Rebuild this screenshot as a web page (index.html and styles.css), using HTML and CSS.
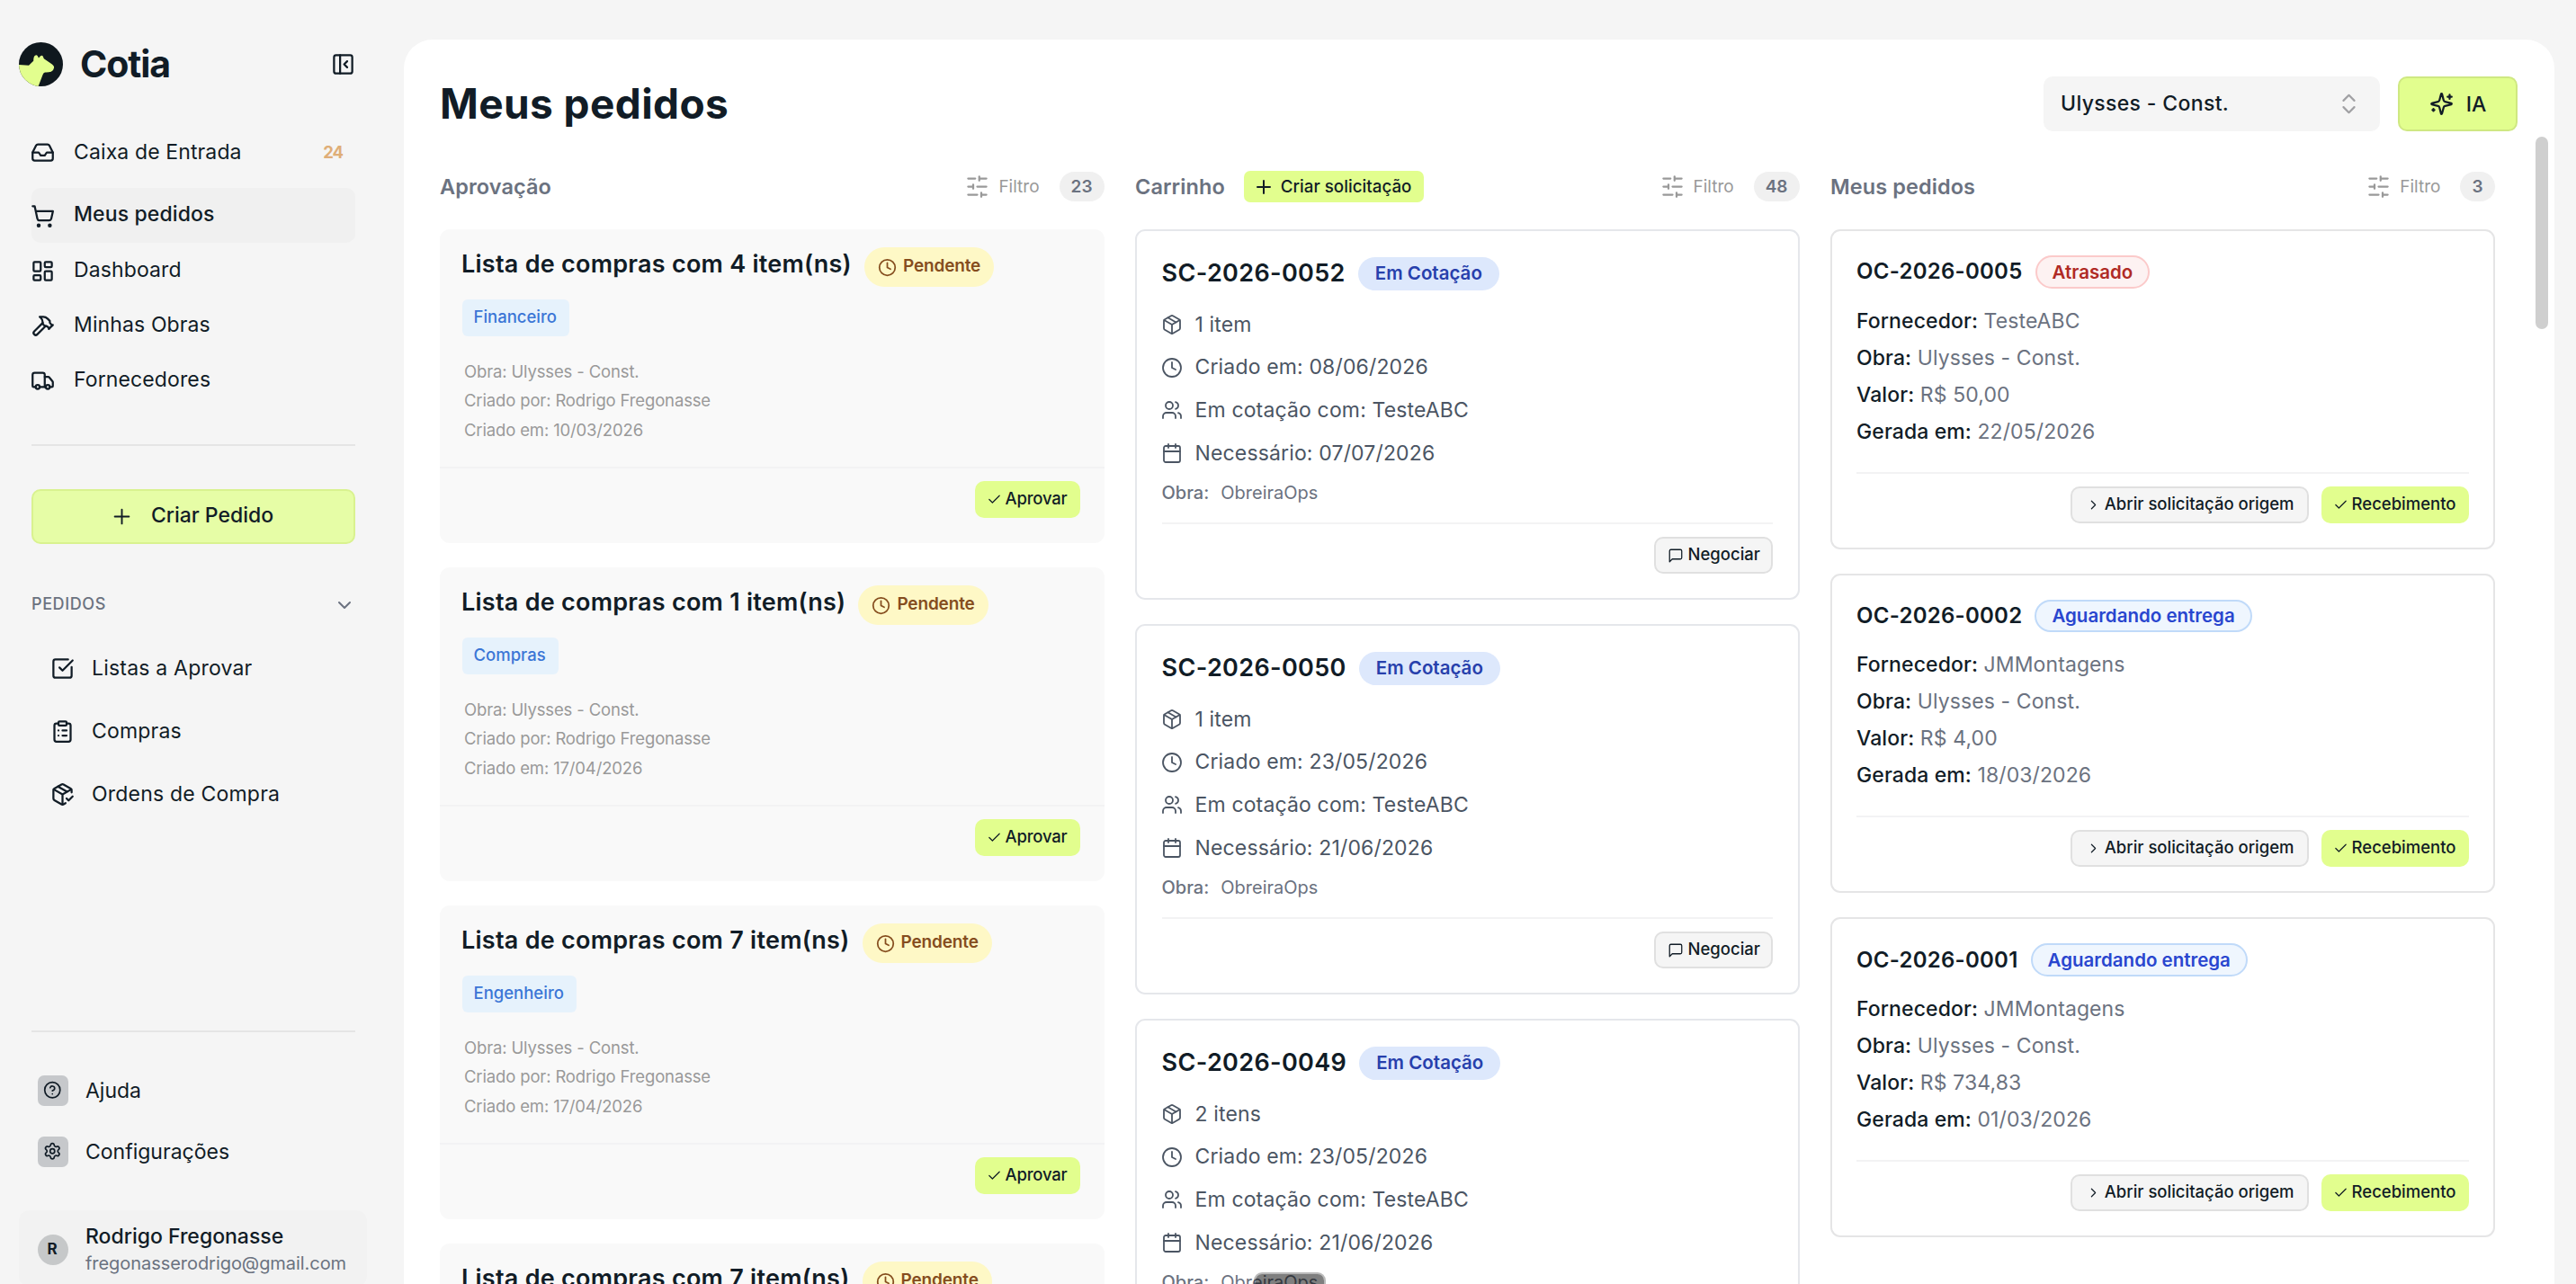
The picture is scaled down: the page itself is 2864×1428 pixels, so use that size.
FILE: index.html
```
<!DOCTYPE html>
<html lang="pt-BR">
<head>
<meta charset="UTF-8">
<meta name="viewport" content="width=device-width, initial-scale=1.0">

<title>Cotia - Meus pedidos</title>

<link rel="stylesheet" href="styles.css">
</head>

<body>

<!-- ICONS -->
<svg class="sprite" aria-hidden="true">
  <symbol id="i-panel" viewBox="0 0 24 24"><rect x="3" y="3" width="18" height="18" rx="2"/><path d="M9 3v18M16 15l-3-3 3-3"/></symbol>
  <symbol id="i-inbox" viewBox="0 0 24 24"><path d="M22 12h-6l-2 3h-4l-2-3H2"/><path d="M5.45 5.11 2 12v6a2 2 0 0 0 2 2h16a2 2 0 0 0 2-2v-6l-3.45-6.89A2 2 0 0 0 16.76 4H7.24a2 2 0 0 0-1.79 1.11z"/></symbol>
  <symbol id="i-cart" viewBox="0 0 24 24"><circle cx="8" cy="21" r="1"/><circle cx="19" cy="21" r="1"/><path d="M2.05 2.05h2l2.66 12.42a2 2 0 0 0 2 1.58h9.78a2 2 0 0 0 1.95-1.57l1.65-7.43H5.12"/></symbol>
  <symbol id="i-dash" viewBox="0 0 24 24"><rect x="3" y="3" width="7" height="9" rx="1"/><rect x="14" y="3" width="7" height="5" rx="1"/><rect x="14" y="12" width="7" height="9" rx="1"/><rect x="3" y="16" width="7" height="5" rx="1"/></symbol>
  <symbol id="i-hammer" viewBox="0 0 24 24"><path d="m15 12-8.373 8.373a1 1 0 1 1-3-3L12 9"/><path d="m18 15 4-4"/><path d="m21.5 11.5-1.914-1.914A2 2 0 0 1 19 8.172V7l-2.26-2.26a6 6 0 0 0-4.202-1.756L9 2.96l.92.82A6.18 6.18 0 0 1 12 8.4V10l2 2h1.172a2 2 0 0 1 1.414.586L18.5 14.5"/></symbol>
  <symbol id="i-truck" viewBox="0 0 24 24"><path d="M14 18V6a2 2 0 0 0-2-2H4a2 2 0 0 0-2 2v11a1 1 0 0 0 1 1h2"/><path d="M15 18H9"/><path d="M19 18h2a1 1 0 0 0 1-1v-3.65a1 1 0 0 0-.22-.624l-3.48-4.35A1 1 0 0 0 17.52 8H14"/><circle cx="17" cy="18" r="2"/><circle cx="7" cy="18" r="2"/></symbol>
  <symbol id="i-plus" viewBox="0 0 24 24"><path d="M5 12h14M12 5v14"/></symbol>
  <symbol id="i-down" viewBox="0 0 24 24"><path d="m6 9 6 6 6-6"/></symbol>
  <symbol id="i-right" viewBox="0 0 24 24"><path d="m9 18 6-6-6-6"/></symbol>
  <symbol id="i-check" viewBox="0 0 24 24"><path d="M20 6 9 17l-5-5"/></symbol>
  <symbol id="i-checkbox" viewBox="0 0 24 24"><path d="M21 10.5V19a2 2 0 0 1-2 2H5a2 2 0 0 1-2-2V5a2 2 0 0 1 2-2h12.5"/><path d="m9 11 3 3L22 4"/></symbol>
  <symbol id="i-clipboard" viewBox="0 0 24 24"><rect x="8" y="2" width="8" height="4" rx="1"/><path d="M16 4h2a2 2 0 0 1 2 2v14a2 2 0 0 1-2 2H6a2 2 0 0 1-2-2V6a2 2 0 0 1 2-2h2"/><path d="M12 11h4M12 16h4M8 11h.01M8 16h.01"/></symbol>
  <symbol id="i-boxcheck" viewBox="0 0 24 24"><path d="m16 16 2 2 4-4"/><path d="M21 10V8a2 2 0 0 0-1-1.73l-7-4a2 2 0 0 0-2 0l-7 4A2 2 0 0 0 3 8v8a2 2 0 0 0 1 1.73l7 4a2 2 0 0 0 2 0l2-1.14"/><path d="m7.5 4.27 9 5.15M3.29 7 12 12l8.71-5M12 22V12"/></symbol>
  <symbol id="i-help" viewBox="0 0 24 24"><circle cx="12" cy="12" r="10"/><path d="M9.09 9a3 3 0 0 1 5.83 1c0 2-3 3-3 3M12 17h.01"/></symbol>
  <symbol id="i-gear" viewBox="0 0 24 24"><path d="M9.67 4.14a2.34 2.34 0 0 1 4.66 0 2.34 2.34 0 0 0 3.32 1.91 2.34 2.34 0 0 1 2.33 4.04 2.34 2.34 0 0 0 0 3.82 2.34 2.34 0 0 1-2.33 4.04 2.34 2.34 0 0 0-3.32 1.91 2.34 2.34 0 0 1-4.66 0 2.34 2.34 0 0 0-3.32-1.91 2.34 2.34 0 0 1-2.33-4.04 2.34 2.34 0 0 0 0-3.82 2.34 2.34 0 0 1 2.33-4.04 2.34 2.34 0 0 0 3.32-1.91"/><circle cx="12" cy="12" r="3"/></symbol>
  <symbol id="i-updown" viewBox="0 0 24 24"><path d="m7 15 5 5 5-5M7 9l5-5 5 5"/></symbol>
  <symbol id="i-sparkles" viewBox="0 0 24 24"><path d="M9.937 15.5A2 2 0 0 0 8.5 14.063l-6.135-1.582a.5.5 0 0 1 0-.962L8.5 9.936A2 2 0 0 0 9.937 8.5l1.582-6.135a.5.5 0 0 1 .963 0L14.063 8.5A2 2 0 0 0 15.5 9.937l6.135 1.581a.5.5 0 0 1 0 .964L15.5 14.063a2 2 0 0 0-1.437 1.437l-1.582 6.135a.5.5 0 0 1-.963 0z"/><path d="M20 3v4M22 5h-4M4 17v2M5 18H3"/></symbol>
  <symbol id="i-sliders" viewBox="0 0 24 24"><path d="M21 4h-7M10 4H3M21 12h-9M8 12H3M21 20h-5M12 20H3M14 2v4M8 10v4M16 18v4"/></symbol>
  <symbol id="i-clock" viewBox="0 0 24 24"><circle cx="12" cy="12" r="10"/><path d="M12 6v6l4 2"/></symbol>
  <symbol id="i-box" viewBox="0 0 24 24"><path d="m7.5 4.27 9 5.15"/><path d="M21 8a2 2 0 0 0-1-1.73l-7-4a2 2 0 0 0-2 0l-7 4A2 2 0 0 0 3 8v8a2 2 0 0 0 1 1.73l7 4a2 2 0 0 0 2 0l7-4A2 2 0 0 0 21 16Z"/><path d="m3.3 7 8.7 5 8.7-5M12 22V12"/></symbol>
  <symbol id="i-users" viewBox="0 0 24 24"><path d="M16 21v-2a4 4 0 0 0-4-4H6a4 4 0 0 0-4 4v2"/><circle cx="9" cy="7" r="4"/><path d="M22 21v-2a4 4 0 0 0-3-3.87M16 3.13a4 4 0 0 1 0 7.75"/></symbol>
  <symbol id="i-cal" viewBox="0 0 24 24"><path d="M8 2v4M16 2v4"/><rect x="3" y="4" width="18" height="18" rx="2"/><path d="M3 10h18"/></symbol>
  <symbol id="i-msg" viewBox="0 0 24 24"><path d="M21 15a2 2 0 0 1-2 2H7l-4 4V5a2 2 0 0 1 2-2h14a2 2 0 0 1 2 2z"/></symbol>
</svg>

<div class="app">

  <!-- SIDEBAR -->
  <aside class="sidebar">
    <div class="brand">
      <svg class="logo" viewBox="0 0 49 49">
        <clipPath id="round"><circle cx="24.5" cy="24.5" r="24.5"/></clipPath>
        <g clip-path="url(#round)">
          <rect width="49" height="49" fill="#0f181e"/>
          <path fill="#e2fe8e" d="M0 25 11 25.7 16.2 20.8Q16.2 16 18 14.8 19.6 13.6 20.8 15.2L22 17.6 23.8 15.6Q25.8 14 26.8 15.8L27.8 18.3 35.5 23.4Q39.4 25.8 39.1 28.2 38.6 31.6 35.8 32.7 32.6 33.6 29 33.4 27.4 33.8 26.6 36L21.6 49H0z"/>
        </g>
      </svg>
      <span class="brand-name">Cotia</span>
      <svg class="ico nav-ico toggle"><use href="#i-panel"/></svg>
    </div>

    <nav class="nav">
      <a class="nav-item first"><svg class="ico nav-ico"><use href="#i-inbox"/></svg><span>Caixa de Entrada</span><b class="unread">24</b></a>
      <a class="nav-item active"><svg class="ico nav-ico"><use href="#i-cart"/></svg><span>Meus pedidos</span></a>
      <a class="nav-item"><svg class="ico nav-ico"><use href="#i-dash"/></svg><span>Dashboard</span></a>
      <a class="nav-item"><svg class="ico nav-ico"><use href="#i-hammer"/></svg><span>Minhas Obras</span></a>
      <a class="nav-item"><svg class="ico nav-ico"><use href="#i-truck"/></svg><span>Fornecedores</span></a>
    </nav>

    <div class="line"></div>
    <button class="create"><svg class="ico nav-ico"><use href="#i-plus"/></svg><span>Criar Pedido</span></button>

    <div class="group-title"><span>PEDIDOS</span><svg class="ico"><use href="#i-down"/></svg></div>
    <nav class="subnav">
      <a class="sub-item"><svg class="ico nav-ico"><use href="#i-checkbox"/></svg><span>Listas a Aprovar</span></a>
      <a class="sub-item"><svg class="ico nav-ico"><use href="#i-clipboard"/></svg><span>Compras</span></a>
      <a class="sub-item"><svg class="ico nav-ico"><use href="#i-boxcheck"/></svg><span>Ordens de Compra</span></a>
    </nav>

    <div class="bottom">
      <div class="line"></div>
      <a class="util"><i class="square"><svg class="ico"><use href="#i-help"/></svg></i><span>Ajuda</span></a>
      <a class="util"><i class="square"><svg class="ico"><use href="#i-gear"/></svg></i><span>Configurações</span></a>
      <div class="user">
        <div class="avatar">R</div>
        <div>
          <div class="user-name">Rodrigo Fregonasse</div>
          <div class="user-mail">fregonasserodrigo@gmail.com</div>
        </div>
      </div>
    </div>
  </aside>

  <!-- MAIN -->
  <main class="main">
    <header class="top">
      <h1>Meus pedidos</h1>
      <div class="select"><span>Ulysses - Const.</span><svg class="ico"><use href="#i-updown"/></svg></div>
      <button class="ia"><svg class="ico nav-ico"><use href="#i-sparkles"/></svg><span>IA</span></button>
    </header>

    <div class="board">

      <!-- Aprovação -->
      <section class="col">
        <div class="col-head">
          <h2>Aprovação</h2>
          <div class="filter"><svg class="ico nav-ico"><use href="#i-sliders"/></svg>Filtro</div>
          <span class="count">23</span>
        </div>

        <article class="card list">
          <div class="card-head"><h3>Lista de compras com 4 item(ns)</h3><span class="pill pending"><svg class="ico"><use href="#i-clock"/></svg><span>Pendente</span></span></div>
          <span class="tag">Financeiro</span>
          <div class="info"><p>Obra: Ulysses - Const.</p><p>Criado por: Rodrigo Fregonasse</p><p>Criado em: 10/03/2026</p></div>
          <div class="actions"><button class="btn green approve"><svg class="ico"><use href="#i-check"/></svg><span>Aprovar</span></button></div>
        </article>

        <article class="card list">
          <div class="card-head"><h3>Lista de compras com 1 item(ns)</h3><span class="pill pending"><svg class="ico"><use href="#i-clock"/></svg><span>Pendente</span></span></div>
          <span class="tag">Compras</span>
          <div class="info"><p>Obra: Ulysses - Const.</p><p>Criado por: Rodrigo Fregonasse</p><p>Criado em: 17/04/2026</p></div>
          <div class="actions"><button class="btn green approve"><svg class="ico"><use href="#i-check"/></svg><span>Aprovar</span></button></div>
        </article>

        <article class="card list">
          <div class="card-head"><h3>Lista de compras com 7 item(ns)</h3><span class="pill pending"><svg class="ico"><use href="#i-clock"/></svg><span>Pendente</span></span></div>
          <span class="tag">Engenheiro</span>
          <div class="info"><p>Obra: Ulysses - Const.</p><p>Criado por: Rodrigo Fregonasse</p><p>Criado em: 17/04/2026</p></div>
          <div class="actions"><button class="btn green approve"><svg class="ico"><use href="#i-check"/></svg><span>Aprovar</span></button></div>
        </article>

        <article class="card list">
          <div class="card-head"><h3>Lista de compras com 7 item(ns)</h3><span class="pill pending"><svg class="ico"><use href="#i-clock"/></svg><span>Pendente</span></span></div>
        </article>
      </section>

      <!-- Carrinho -->
      <section class="col">
        <div class="col-head">
          <h2>Carrinho</h2>
          <button class="new"><svg class="ico"><use href="#i-plus"/></svg><span>Criar solicitação</span></button>
          <div class="filter"><svg class="ico nav-ico"><use href="#i-sliders"/></svg>Filtro</div>
          <span class="count">48</span>
        </div>

        <article class="card cart">
          <div class="card-head"><h3>SC-2026-0052</h3><span class="pill quote">Em Cotação</span></div>
          <ul class="facts">
            <li><svg class="ico"><use href="#i-box"/></svg><span>1 item</span></li>
            <li><svg class="ico"><use href="#i-clock"/></svg><span>Criado em: 08/06/2026</span></li>
            <li><svg class="ico"><use href="#i-users"/></svg><span>Em cotação com: TesteABC</span></li>
            <li><svg class="ico"><use href="#i-cal"/></svg><span>Necessário: 07/07/2026</span></li>
          </ul>
          <div class="site"><b>Obra:</b><span>ObreiraOps</span></div>
          <div class="actions"><button class="btn grey talk"><svg class="ico"><use href="#i-msg"/></svg><span>Negociar</span></button></div>
        </article>

        <article class="card cart">
          <div class="card-head"><h3>SC-2026-0050</h3><span class="pill quote">Em Cotação</span></div>
          <ul class="facts">
            <li><svg class="ico"><use href="#i-box"/></svg><span>1 item</span></li>
            <li><svg class="ico"><use href="#i-clock"/></svg><span>Criado em: 23/05/2026</span></li>
            <li><svg class="ico"><use href="#i-users"/></svg><span>Em cotação com: TesteABC</span></li>
            <li><svg class="ico"><use href="#i-cal"/></svg><span>Necessário: 21/06/2026</span></li>
          </ul>
          <div class="site"><b>Obra:</b><span>ObreiraOps</span></div>
          <div class="actions"><button class="btn grey talk"><svg class="ico"><use href="#i-msg"/></svg><span>Negociar</span></button></div>
        </article>

        <article class="card cart">
          <div class="card-head"><h3>SC-2026-0049</h3><span class="pill quote">Em Cotação</span></div>
          <ul class="facts">
            <li><svg class="ico"><use href="#i-box"/></svg><span>2 itens</span></li>
            <li><svg class="ico"><use href="#i-clock"/></svg><span>Criado em: 23/05/2026</span></li>
            <li><svg class="ico"><use href="#i-users"/></svg><span>Em cotação com: TesteABC</span></li>
            <li><svg class="ico"><use href="#i-cal"/></svg><span>Necessário: 21/06/2026</span></li>
          </ul>
          <div class="site"><b>Obra:</b><span class="hovered">ObreiraOps<i class="tip"></i></span></div>
        </article>
      </section>

      <!-- Meus pedidos -->
      <section class="col">
        <div class="col-head">
          <h2>Meus pedidos</h2>
          <div class="filter"><svg class="ico nav-ico"><use href="#i-sliders"/></svg>Filtro</div>
          <span class="count">3</span>
        </div>

        <article class="card order">
          <div class="card-head"><h3>OC-2026-0005</h3><span class="pill late">Atrasado</span></div>
          <div class="fields">
            <p><b>Fornecedor:</b> TesteABC</p>
            <p><b>Obra:</b> Ulysses - Const.</p>
            <p><b>Valor:</b> R$ 50,00</p>
            <p><b>Gerada em:</b> 22/05/2026</p>
          </div>
          <div class="actions">
            <button class="btn grey open"><svg class="ico"><use href="#i-right"/></svg><span>Abrir solicitação origem</span></button>
            <button class="btn green"><svg class="ico"><use href="#i-check"/></svg><span>Recebimento</span></button>
          </div>
        </article>

        <article class="card order">
          <div class="card-head"><h3>OC-2026-0002</h3><span class="pill wait">Aguardando entrega</span></div>
          <div class="fields">
            <p><b>Fornecedor:</b> JMMontagens</p>
            <p><b>Obra:</b> Ulysses - Const.</p>
            <p><b>Valor:</b> R$ 4,00</p>
            <p><b>Gerada em:</b> 18/03/2026</p>
          </div>
          <div class="actions">
            <button class="btn grey open"><svg class="ico"><use href="#i-right"/></svg><span>Abrir solicitação origem</span></button>
            <button class="btn green"><svg class="ico"><use href="#i-check"/></svg><span>Recebimento</span></button>
          </div>
        </article>

        <article class="card order">
          <div class="card-head"><h3>OC-2026-0001</h3><span class="pill wait">Aguardando entrega</span></div>
          <div class="fields">
            <p><b>Fornecedor:</b> JMMontagens</p>
            <p><b>Obra:</b> Ulysses - Const.</p>
            <p><b>Valor:</b> R$ 734,83</p>
            <p><b>Gerada em:</b> 01/03/2026</p>
          </div>
          <div class="actions">
            <button class="btn grey open"><svg class="ico"><use href="#i-right"/></svg><span>Abrir solicitação origem</span></button>
            <button class="btn green"><svg class="ico"><use href="#i-check"/></svg><span>Recebimento</span></button>
          </div>
        </article>
      </section>

    </div>

    <div class="scroll"></div>
  </main>

</div>

</body>
</html>
```
FILE: styles.css
```
*{
 box-sizing:border-box;
}

body{
 margin:0;
 background:#f5f5f5;
 color:#111c26;
 font-family:'Inter','Liberation Sans',sans-serif;
 font-size:23px;
 overflow:hidden;
}

h1,h2,h3,p,ul{
 margin:0;
 padding:0;
 font-weight:inherit;
}

button{
 font:inherit;
 color:inherit;
 border:none;
 padding:0;
 cursor:pointer;
}

.sprite{
 display:none;
}

.ico{
 flex:none;
 width:24px;
 height:24px;
 fill:none;
 stroke:currentColor;
 stroke-width:2;
 stroke-linecap:round;
 stroke-linejoin:round;
}

.nav-ico{
 width:27px;
 height:27px;
}

.app{
 display:flex;
 height:100vh;
 overflow:hidden;
}

/* SIDEBAR */
.sidebar{
 flex:none;
 width:449px;
}

.brand{
 display:flex;
 align-items:center;
 height:49px;
 margin:47px 54px 42.5px 21px;
}

.logo{
 width:49px;
 height:49px;
}

.brand-name{
 margin:0 auto 2px 19px;
 font-size:41px;
 font-weight:700;
 letter-spacing:-1.1px;
}

.nav,
.line,
.create,
.group-title,
.subnav{
 margin-left:35px;
 margin-right:54px;
}

.nav-item{
 display:flex;
 align-items:center;
 gap:21px;
 height:61px;
 border-radius:10px;
 letter-spacing:.12px;
}

.nav-item .ico{
 margin-left:-1px;
 margin-top:1px;
}

.nav-item span{
 padding-bottom:2px;
}

.nav-item.first{
 margin-bottom:9.5px;
}

.nav-item.first span{
 padding-bottom:0;
}

.nav-item.active{
 background:#f0f0f0;
 font-weight:500;
}

.nav-item.active span{
 padding-bottom:3px;
}

.unread{
 margin:0 14px 0 auto;
 color:#dfae78;
 font-size:18.5px;
 font-weight:700;
 letter-spacing:-1px;
}

.line{
 height:2px;
 margin-top:41px;
 background:#e5e5e5;
}

.create{
 display:flex;
 align-items:center;
 justify-content:center;
 gap:19px;
 width:360px;
 height:61px;
 margin-top:48px;
 background:#e6fda6;
 border:2px solid #d9f28f;
 border-radius:10px;
 font-weight:500;
}

.create .ico{
 margin-left:-4px;
 margin-bottom:1px;
 stroke-width:1.7;
}

.create span{
 padding-bottom:3px;
}

.group-title{
 display:flex;
 align-items:center;
 justify-content:space-between;
 height:40px;
 margin-top:46px;
 color:#6b7280;
 font-size:18px;
 font-weight:500;
 letter-spacing:.6px;
}

.group-title .ico{
 margin:4px 0 0;
}

.subnav{
 margin-top:17px;
}

.sub-item{
 display:flex;
 align-items:center;
 gap:19px;
 height:70px;
 padding-left:21px;
 letter-spacing:.2px;
}

.bottom{
 margin-top:228px;
}

.bottom .line{
 margin-bottom:48px;
}

.util{
 display:flex;
 align-items:center;
 gap:19px;
 height:34px;
 margin:0 0 34px 42px;
}

.square{
 display:flex;
 align-items:center;
 justify-content:center;
 width:34px;
 height:34px;
 padding:0 2px 2px 0;
 background:#c6c8cb;
 border-radius:7px;
}

.square .ico{
 width:20.5px;
 height:20.5px;
}

.user{
 display:flex;
 align-items:center;
 gap:19px;
 height:85px;
 margin:48px 41px 0 21px;
 padding:2px 0 0 21px;
 background:#f2f2f2;
 border-radius:12px;
}

.avatar{
 display:flex;
 align-items:center;
 justify-content:center;
 width:34px;
 height:34px;
 background:#c6c8c9;
 border-radius:50%;
 font-size:17px;
 font-weight:700;
 padding:0 2px 2px 0;
}

.user-name{
 margin-top:2px;
 line-height:30px;
 font-weight:500;
}

.user-mail{
 line-height:31px;
 color:#6b7280;
 font-size:20px;
 letter-spacing:-.05px;
}

/* MAIN */
.main{
 position:relative;
 width:2391px;
 margin-top:44px;
 padding:41px 0 0 40px;
 background:#fff;
 border-radius:32px 32px 0 0;
}

.top{
 display:flex;
 align-items:center;
 height:61px;
 padding-right:41px;
}

.top h1{
 margin:0 auto 1px 0;
 font-size:46px;
 font-weight:700;
 letter-spacing:.4px;
}

.select{
 display:flex;
 align-items:center;
 justify-content:space-between;
 width:374px;
 height:61px;
 padding:0 20px 0 19px;
 background:#f5f5f5;
 border-radius:10px;
 font-weight:500;
 letter-spacing:.35px;
}

.select span{
 padding-bottom:1px;
}

.select .ico{
 width:29px;
 height:29px;
 color:#a0a0a3;
 stroke-width:1.8;
}

.ia{
 display:flex;
 align-items:center;
 justify-content:center;
 gap:14px;
 width:133px;
 height:61px;
 margin-left:20px;
 background:#e2fe8e;
 border:2px solid #cfe882;
 border-radius:10px;
 font-weight:500;
}

.board{
 display:grid;
 grid-template-columns:repeat(3,1fr);
 gap:34.5px;
 margin:44px 66.5px 0 0;
}

.col-head{
 display:flex;
 align-items:center;
 height:35px;
 margin-bottom:30px;
 color:#6b7280;
}

.col-head h2{
 font-size:23.5px;
 font-weight:600;
 letter-spacing:.08px;
}

.new{
 display:flex;
 align-items:center;
 gap:7px;
 height:35px;
 margin-left:21px;
 padding:0 14px 0 10px;
 background:#e2fe8e;
 border-radius:7px;
 color:#111c26;
 font-size:18.8px;
 font-weight:500;
}

.filter{
 display:flex;
 align-items:center;
 gap:10px;
 margin-left:auto;
 color:#999;
 font-size:19px;
}

.count{
 height:33px;
 margin-left:22px;
 padding:0 13px;
 background:#f0f0f0;
 border-radius:17px;
 font-size:19px;
 font-weight:600;
 line-height:33px;
}

/* CARDS */
.card{
 margin-bottom:27px;
 border-radius:11px;
}

.card-head{
 display:flex;
 align-items:center;
}

.card h3{
 font-size:27px;
 font-weight:600;
 letter-spacing:.25px;
}

.pill{
 display:flex;
 align-items:center;
 border-radius:22px;
 font-size:20.5px;
 font-weight:600;
}

.actions{
 display:flex;
 justify-content:flex-end;
 gap:14px;
 padding-top:14px;
 border-top:2px solid #f3f3f4;
}

.btn{
 display:flex;
 align-items:center;
 gap:4px;
 height:41px;
 padding:0 14px 0 13px;
 border-radius:10px;
 font-size:18.5px;
 font-weight:500;
}

.btn span{
 padding-bottom:3px;
}

.btn .ico{
 width:17px;
 height:17px;
 stroke-width:1.7;
}

.green{
 background:#e2fe8e;
}

.grey{
 background:#f5f5f5;
 border:2px solid #e0e0e0;
}

/* approval lists */
.list{
 height:349px;
 padding-top:20px;
 background:#f9f9f9;
}

.list .card-head{
 height:43.5px;
 padding-left:24px;
}

.list h3{
 padding-bottom:6px;
}

.pending{
 gap:7px;
 height:43.5px;
 margin-left:14px;
 padding:0 15px;
 background:#fef8c6;
 color:#854d1e;
 font-size:19px;
 letter-spacing:-.15px;
}

.pending .ico{
 width:21px;
 height:21px;
 margin-top:2px;
}

.pending span{
 padding-bottom:3px;
}

.tag{
 display:inline-block;
 height:41px;
 margin:14.5px 0 0 24.5px;
 padding:0 14px 0 13px;
 background:#e6f2fc;
 border-radius:6px;
 color:#3b76d6;
 font-size:18.5px;
 font-weight:500;
 line-height:39px;
 vertical-align:top;
}

.info{
 margin-top:22.5px;
 padding:0 0 24.5px 27px;
 color:#999;
 font-size:18.5px;
 line-height:32.8px;
 letter-spacing:-.15px;
}

.list .actions{
 padding-right:27px;
}

.approve{
 letter-spacing:-.2px;
}

/* purchase requests */
.cart{
 height:412px;
 padding:29px 27.5px 0;
 border:2px solid #e5e7eb;
}

.cart .card-head{
 height:37px;
}

.cart h3{
 padding-bottom:3px;
 letter-spacing:.35px;
}

.quote{
 height:37px;
 margin-left:14px;
 padding:0 19px 2px;
 background:#dde8fc;
 color:#2740ac;
}

.facts{
 margin-top:14px;
 list-style:none;
 color:#4b5563;
}

.facts li{
 display:flex;
 align-items:center;
 gap:14px;
 height:47.6px;
 letter-spacing:.15px;
}

.facts .ico{
 margin-left:-1px;
 margin-top:1px;
 stroke-width:1.8;
}

.site{
 display:flex;
 gap:13px;
 height:30px;
 margin:6px 0 18px;
 color:#6b7280;
 font-size:20px;
 line-height:30px;
}

.site b{
 font-weight:500;
}

.hovered{
 position:relative;
}

.tip{
 position:absolute;
 left:37px;
 top:4px;
 width:80px;
 height:30px;
 background:rgba(0,0,0,.5);
 background-clip:padding-box;
 border:2px solid rgba(0,0,0,.27);
 border-radius:9px;
}

.talk{
 gap:5px;
 padding-right:12px;
}

.talk .ico{
 width:18px;
 height:18px;
}

/* purchase orders */
.order{
 height:355.7px;
 padding:27px 27px 0;
 border:2px solid #e5e5e6;
}

.order .card-head{
 height:36.5px;
}

.order h3{
 padding-bottom:1px;
 font-size:24px;
}

.late,
.wait{
 height:36.5px;
 margin-left:14px;
 padding:0 17px;
 border:2px solid #fbcaca;
 background:#fdf2f2;
 color:#b02a25;
}

.wait{
 border-color:#c0daf9;
 background:#eff6fe;
 color:#2946cf;
}

.fields{
 margin:16px 0 24px;
 color:#6b7280;
 line-height:41px;
 letter-spacing:.1px;
}

.fields b{
 color:#111c26;
 font-weight:500;
}

.open{
 gap:4px;
 padding-left:15px;
 padding-right:14px;
}

/* board scrollbar */
.scroll{
 position:absolute;
 top:108px;
 right:7px;
 width:14px;
 height:214px;
 background:#cfcfcf;
 border-radius:7px;
}
```
